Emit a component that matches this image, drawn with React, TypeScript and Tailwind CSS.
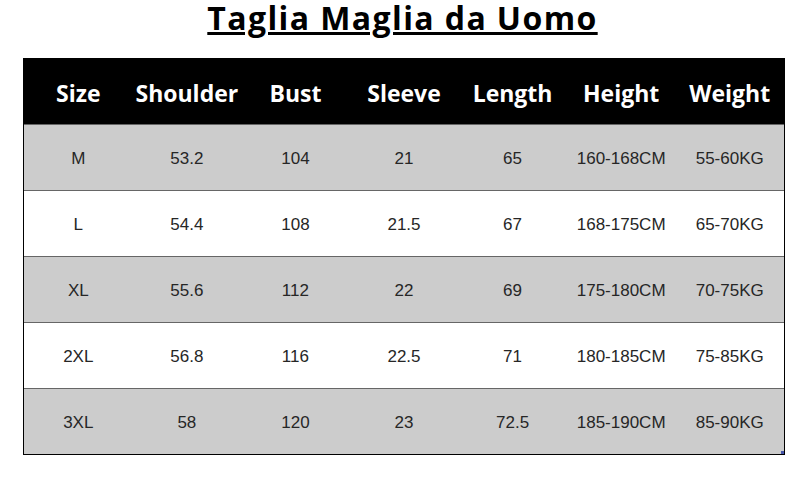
import React from 'react';

const headers = ['Size', 'Shoulder', 'Bust', 'Sleeve', 'Length', 'Height', 'Weight'];

const rows = [
  ['M', '53.2', '104', '21', '65', '160-168CM', '55-60KG'],
  ['L', '54.4', '108', '21.5', '67', '168-175CM', '65-70KG'],
  ['XL', '55.6', '112', '22', '69', '175-180CM', '70-75KG'],
  ['2XL', '56.8', '116', '22.5', '71', '180-185CM', '75-85KG'],
  ['3XL', '58', '120', '23', '72.5', '185-190CM', '85-90KG'],
];

export default function App() {
  return (
    <div className="w-[805px] h-[477px] bg-white overflow-hidden">
      {/* title */}
      <div className="h-[58px] flex justify-center">
        <h1 className="font-['Open_Sans',sans-serif] font-bold text-[32px] leading-[36px] tracking-[1.4px] text-black underline decoration-[3px] underline-offset-[2px]">
          Taglia Maglia da Uomo
        </h1>
      </div>

      {/* size table */}
      <div className="relative ml-[23px] w-[762px] border-x border-b border-black">
        <div className="grid grid-cols-7 h-[66px] pt-[4px] bg-black items-center text-white font-['Open_Sans',sans-serif] font-bold text-[23px]">
          {headers.map((h) => (
            <div key={h} className="text-center">{h}</div>
          ))}
        </div>
        {rows.map((r, i) => (
          <div
            key={r[0]}
            className={`grid grid-cols-7 h-[66px] pt-[3px] items-center border-t border-[#666] font-['Liberation_Sans',sans-serif] text-[17px] text-[#262626] ${
              i % 2 === 0 ? 'bg-[#cccccc]' : 'bg-white'
            }`}
          >
            {r.map((c, j) => (
              <div key={j} className="text-center">{c}</div>
            ))}
          </div>
        ))}
        <div className="absolute right-0 bottom-0 w-[3px] h-[3px] bg-[#4455aa]" />
      </div>
    </div>
  );
}
